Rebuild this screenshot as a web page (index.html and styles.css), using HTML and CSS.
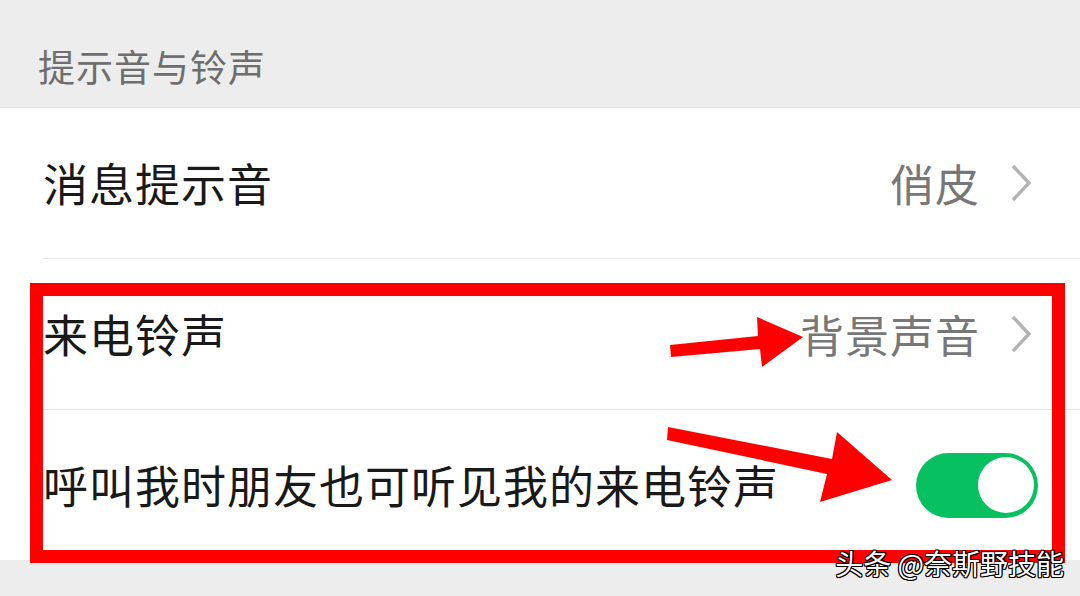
FILE: index.html
```html
<!DOCTYPE html>
<html lang="zh-CN">
<head>
    <meta charset="UTF-8">
    <meta name="viewport" content="width=device-width, initial-scale=1.0">
    <title>提示音与铃声</title>
    <link rel="stylesheet" href="styles.css">
</head>
<body>
    <div class="page">
        <div class="section-title">提示音与铃声</div>

        <div class="list">
            <div class="cell">
                <div class="cell-inner">
                    <span class="cell-label">消息提示音</span>
                    <span class="cell-value">俏皮</span>
                    <svg class="chevron" viewBox="0 0 22 38"><polyline points="3,2 19,19 3,36"/></svg>
                </div>
            </div>
            <div class="cell">
                <div class="cell-inner">
                    <span class="cell-label">来电铃声</span>
                    <span class="cell-value">背景声音</span>
                    <svg class="chevron" viewBox="0 0 22 38"><polyline points="3,2 19,19 3,36"/></svg>
                </div>
            </div>
            <div class="cell">
                <div class="cell-inner">
                    <span class="cell-label">呼叫我时朋友也可听见我的来电铃声</span>
                    <div class="switch on"><div class="knob"></div></div>
                </div>
            </div>
        </div>

        <!-- annotations drawn over the screenshot -->
        <div class="mark-box"></div>
        <svg class="arrows" viewBox="0 0 1080 596">
            <polygon points="670,345 758,336 757,317 803,337 762,367 760,349 671,357"/>
            <polygon points="668,427 832,459 837,432 892,480 820,502 827,474 667,440"/>
        </svg>
        <div class="watermark">头条 @奈斯野技能</div>
    </div>
</body>
</html>
```

FILE: styles.css
```css
* {
    margin: 0;
    padding: 0;
    box-sizing: border-box;
}

body {
    font-family: "Noto Sans CJK SC", "Noto Sans", sans-serif;
    background: #ededed;
    width: 1080px;
    height: 596px;
    overflow: hidden;
}

.page {
    position: relative;
    width: 1080px;
    height: 596px;
}

.section-title {
    height: 108px;
    padding: 46px 0 0 38px;
    font-size: 37px;
    line-height: 40px;
    letter-spacing: 1px;
    color: #6e6e6e;
    border-bottom: 1px solid #e2e2e2;
}

.list {
    background: #fff;
}

.cell {
    padding-left: 43px;
}

.cell-inner {
    display: flex;
    align-items: center;
    height: 151px;
    padding-right: 48px;
    border-bottom: 1px solid #e5e5e5;
}

.cell:last-child .cell-inner {
    height: 150px;
    border-bottom: none;
}

.cell-label {
    flex: 1;
    font-size: 45px;
    line-height: 50px;
    letter-spacing: 1px;
    color: #191919;
}

.cell-value {
    font-size: 44px;
    line-height: 50px;
    letter-spacing: 1px;
    color: #777;
    margin-right: 30px;
}

.chevron {
    width: 22px;
    height: 38px;
    fill: none;
    stroke: #b3b3b3;
    stroke-width: 3.5;
}

.switch {
    width: 122px;
    height: 65px;
    border-radius: 33px;
    background: #07c160;
    margin-right: -6px;
    display: flex;
    align-items: center;
    justify-content: flex-end;
    padding-right: 4px;
}

.knob {
    width: 56px;
    height: 56px;
    border-radius: 50%;
    background: #fff;
}

.mark-box {
    position: absolute;
    left: 30px;
    top: 283px;
    width: 1035px;
    height: 280px;
    border: 13px solid #ff0000;
}

.arrows {
    position: absolute;
    left: 0;
    top: 0;
    width: 1080px;
    height: 596px;
    fill: #ff0000;
}

.watermark {
    position: absolute;
    right: 16px;
    top: 545px;
    font-size: 28px;
    line-height: 36px;
    color: #fff;
    text-shadow: 1px 1px 0 #000, -1px -1px 0 #000, 1px -1px 0 #000, -1px 1px 0 #000,
                 0 1px 0 #000, 0 -1px 0 #000, 1px 0 0 #000, -1px 0 0 #000;
}
```
